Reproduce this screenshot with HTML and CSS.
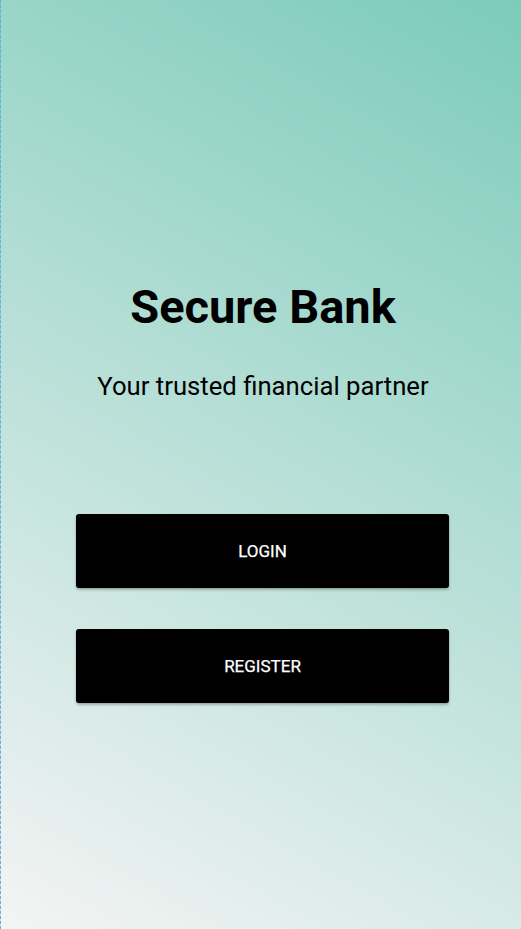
FILE: index.html
```html
<!DOCTYPE html>
<html lang="en">
<head>
<meta charset="utf-8">
<title>Secure Bank</title>
<link rel="stylesheet" href="styles.css">
</head>
<body>
<main class="screen">
  <section class="hero">
    <h1 class="title">Secure Bank</h1>
    <p class="subtitle">Your trusted financial partner</p>
  </section>
  <div class="actions">
    <button class="btn">LOGIN</button>
    <button class="btn">REGISTER</button>
  </div>
</main>
</body>
</html>
```

FILE: styles.css
```css
html, body {
  margin: 0;
  padding: 0;
  height: 100%;
}
body {
  font-family: Roboto, "Noto Sans", sans-serif;
}
.screen {
  box-sizing: border-box;
  height: 929px;
  border-left: 1px dashed #62aef0;
  background: linear-gradient(29.3deg, #f4f4f4 0%, #7ccbbb 100%);
  display: flex;
  flex-direction: column;
  align-items: center;
  padding-top: 279px;
}
.hero {
  display: flex;
  flex-direction: column;
  align-items: center;
  padding-left: 4px;
}
.title {
  margin: 0;
  font-size: 47px;
  font-weight: 700;
  line-height: 56px;
  color: #000;
}
.subtitle {
  margin: 35px 0 0;
  font-size: 25.7px;
  font-weight: 400;
  line-height: 32px;
  color: #000;
}
.actions {
  margin-top: 112px;
  display: flex;
  flex-direction: column;
  gap: 41px;
  width: 373px;
  padding-left: 3px;
}
.btn {
  height: 74px;
  border: none;
  border-radius: 3px;
  background: #000;
  color: #fff;
  font-family: Roboto, sans-serif;
  font-size: 17px;
  font-weight: 400;
  -webkit-text-stroke: 0.25px #fff;
  box-shadow: 0 2px 3px rgba(0, 0, 0, 0.2), 0 1px 2px rgba(0, 0, 0, 0.12);
}
```
